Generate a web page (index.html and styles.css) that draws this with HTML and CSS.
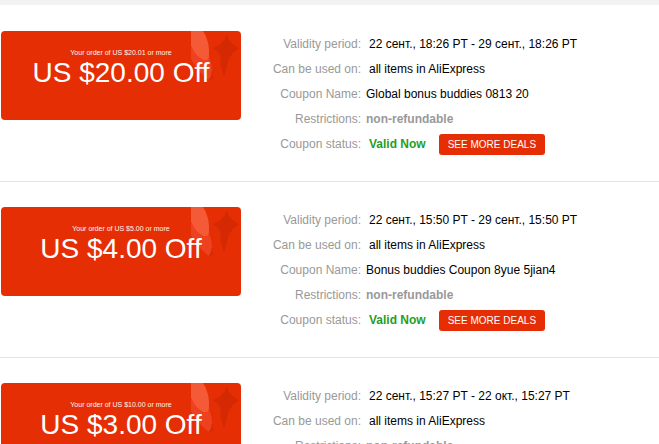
FILE: index.html
```html
<!DOCTYPE html>
<html>
<head>
<meta charset="utf-8">
<link rel="stylesheet" href="styles.css">
</head>
<body>
<div class="band"></div>
<div class="list">
  <div class="item">
    <div class="coupon">
      <svg class="deco" width="50" height="60" viewBox="0 0 50 60">
        <path d="M0 0 H12 Q19 10 18 26 Q17 31 12 29 Q4 25 0 15 Z" fill="#f55a36"/>
        <path d="M0 15 Q4 25 12 29 Q17 31 18 26 Q22 36 22 46 Q20 52 14 46 Q4 36 0 28 Z" fill="#ed4120"/>
        <path d="M18 26 Q22 36 22 46 Q22 50 18 49 Q24 40 18 26 Z" fill="#d82a03"/>
        <path d="M36 3 Q38 13 48 17 Q40 22 37 30 Q35 40 33 46 Q28 32 30 26 Q27 20 22 17 Q33 13 36 3 Z" fill="#d42903"/>
      </svg>
      <div class="cond">Your order of US $20.01 or more</div>
      <div class="amount">US $20.00 Off</div>
    </div>
    <div class="info">
      <div class="lbl">Validity period:</div><div class="val pad">22 сент., 18:26 PT - 29 сент., 18:26 PT</div>
      <div class="lbl">Can be used on:</div><div class="val pad">all items in AliExpress</div>
      <div class="lbl">Coupon Name:</div><div class="val">Global bonus buddies 0813 20</div>
      <div class="lbl">Restrictions:</div><div class="val grey">non-refundable</div>
      <div class="lbl">Coupon status:</div><div class="val pad status"><span class="valid">Valid Now</span><span class="btn">SEE MORE DEALS</span></div>
    </div>
  </div>
  <div class="item">
    <div class="coupon">
      <svg class="deco" width="50" height="60" viewBox="0 0 50 60">
        <path d="M0 0 H12 Q19 10 18 26 Q17 31 12 29 Q4 25 0 15 Z" fill="#f55a36"/>
        <path d="M0 15 Q4 25 12 29 Q17 31 18 26 Q22 36 22 46 Q20 52 14 46 Q4 36 0 28 Z" fill="#ed4120"/>
        <path d="M18 26 Q22 36 22 46 Q22 50 18 49 Q24 40 18 26 Z" fill="#d82a03"/>
        <path d="M36 3 Q38 13 48 17 Q40 22 37 30 Q35 40 33 46 Q28 32 30 26 Q27 20 22 17 Q33 13 36 3 Z" fill="#d42903"/>
      </svg>
      <div class="cond">Your order of US $5.00 or more</div>
      <div class="amount">US $4.00 Off</div>
    </div>
    <div class="info">
      <div class="lbl">Validity period:</div><div class="val pad">22 сент., 15:50 PT - 29 сент., 15:50 PT</div>
      <div class="lbl">Can be used on:</div><div class="val pad">all items in AliExpress</div>
      <div class="lbl">Coupon Name:</div><div class="val">Bonus buddies Coupon 8yue 5jian4</div>
      <div class="lbl">Restrictions:</div><div class="val grey">non-refundable</div>
      <div class="lbl">Coupon status:</div><div class="val pad status"><span class="valid">Valid Now</span><span class="btn">SEE MORE DEALS</span></div>
    </div>
  </div>
  <div class="item">
    <div class="coupon">
      <svg class="deco" width="50" height="60" viewBox="0 0 50 60">
        <path d="M0 0 H12 Q19 10 18 26 Q17 31 12 29 Q4 25 0 15 Z" fill="#f55a36"/>
        <path d="M0 15 Q4 25 12 29 Q17 31 18 26 Q22 36 22 46 Q20 52 14 46 Q4 36 0 28 Z" fill="#ed4120"/>
        <path d="M18 26 Q22 36 22 46 Q22 50 18 49 Q24 40 18 26 Z" fill="#d82a03"/>
        <path d="M36 3 Q38 13 48 17 Q40 22 37 30 Q35 40 33 46 Q28 32 30 26 Q27 20 22 17 Q33 13 36 3 Z" fill="#d42903"/>
      </svg>
      <div class="cond">Your order of US $10.00 or more</div>
      <div class="amount">US $3.00 Off</div>
    </div>
    <div class="info">
      <div class="lbl">Validity period:</div><div class="val pad">22 сент., 15:27 PT - 22 окт., 15:27 PT</div>
      <div class="lbl">Can be used on:</div><div class="val pad">all items in AliExpress</div>
      <div class="lbl">Restrictions:</div><div class="val grey">non-refundable</div>
    </div>
  </div>
</div>
</body>
</html>
```
FILE: styles.css
```css
html, body {
  margin: 0;
  padding: 0;
  background: #fff;
  font-family: "Liberation Sans", Arial, sans-serif;
  overflow: hidden;
}
.band {
  height: 5px;
  background: #f2f2f2;
}
.list {
  padding-top: 1px;
}
.item {
  display: flex;
  align-items: flex-start;
  padding: 25px 0 24px 1px;
  border-bottom: 1px solid #e3e3e3;
}
.coupon {
  position: relative;
  width: 240px;
  height: 89px;
  background: #e62e04;
  border-radius: 4px;
  overflow: hidden;
  padding-top: 17px;
  box-sizing: border-box;
  color: #fff;
  text-align: center;
  flex: none;
}
.deco {
  position: absolute;
  top: 0;
  left: 190px;
}
.cond {
  position: relative;
  font-size: 7px;
  line-height: 9px;
  color: #fff6e8;
}
.amount {
  position: relative;
  font-size: 28px;
  line-height: 32px;
}
.info {
  display: grid;
  grid-template-columns: 120px auto;
  column-gap: 5px;
  font-size: 12px;
  line-height: 25px;
  padding-top: 1px;
}
.lbl {
  color: #999;
  text-align: right;
}
.val {
  color: #000;
}
.pad {
  padding-left: 3px;
}
.grey {
  color: #999;
  font-weight: bold;
}
.status {
  display: flex;
  align-items: center;
}
.valid {
  color: #1f9e1f;
  font-weight: bold;
}
.btn {
  margin-left: 13px;
  background: #e62e04;
  color: #fff;
  font-size: 10px;
  line-height: 21px;
  height: 21px;
  padding: 0 9px;
  border-radius: 3px;
}
```
